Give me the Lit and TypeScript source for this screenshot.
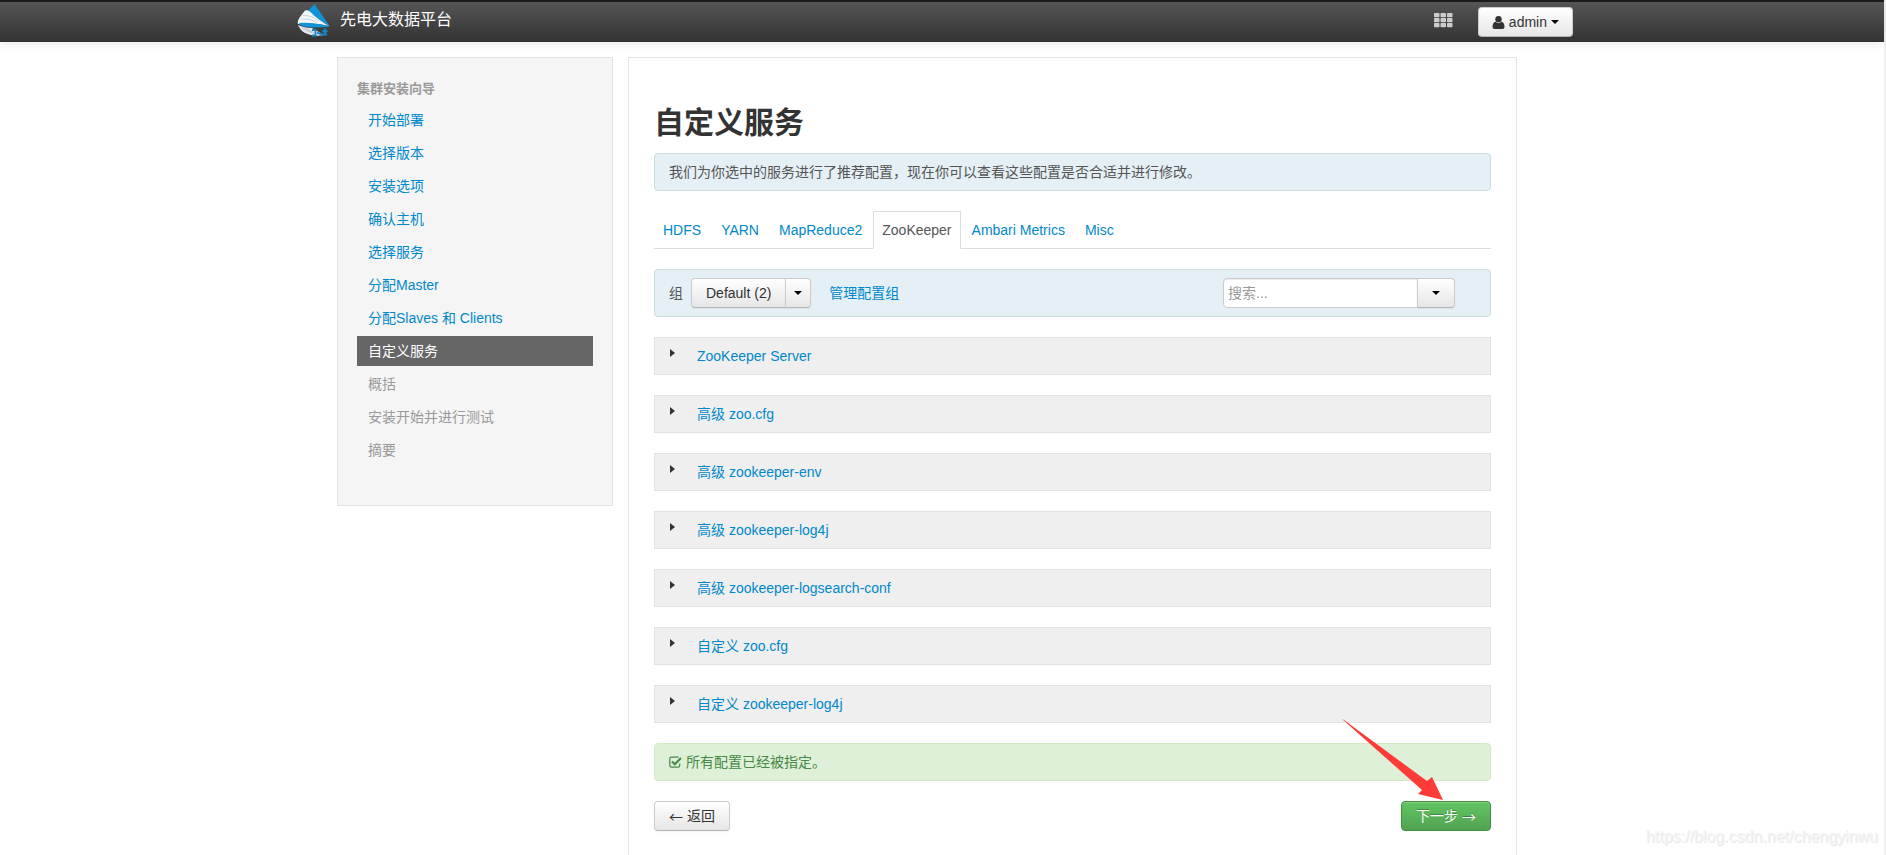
import { LitElement, html, css, svg } from "lit";
import { customElement } from "lit/decorators.js";
import { classMap } from "lit/directives/class-map.js";

type StepState = "done" | "current" | "todo";

const STEPS: Array<{ label: string; state: StepState }> = [
  { label: "开始部署", state: "done" },
  { label: "选择版本", state: "done" },
  { label: "安装选项", state: "done" },
  { label: "确认主机", state: "done" },
  { label: "选择服务", state: "done" },
  { label: "分配Master", state: "done" },
  { label: "分配Slaves 和 Clients", state: "done" },
  { label: "自定义服务", state: "current" },
  { label: "概括", state: "todo" },
  { label: "安装开始并进行测试", state: "todo" },
  { label: "摘要", state: "todo" },
];

const TABS = ["HDFS", "YARN", "MapReduce2", "ZooKeeper", "Ambari Metrics", "Misc"];
const ACTIVE_TAB = "ZooKeeper";

const SECTIONS = [
  "ZooKeeper Server",
  "高级 zoo.cfg",
  "高级 zookeeper-env",
  "高级 zookeeper-log4j",
  "高级 zookeeper-logsearch-conf",
  "自定义 zoo.cfg",
  "自定义 zookeeper-log4j",
];

const logo = html`<svg class="logo" viewBox="0 0 34 34" aria-hidden="true">
  <path d="M17.500 0 L33 22.500 L10 8 Z" fill="#0f94d8" />
  <path d="M8 6.500 Q11 5.500 14 8.500 Q20 15 32 22 Q17 18.500 1 20 Q0 17 3 13 Z" fill="#f4f7fa" />
  <path d="M6 11.500 Q14 11 22 17 M4 15 Q12 14 20 18" fill="none" stroke="#b9c3cc" stroke-width="0.700" />
  <path d="M2 19 Q16 18 33 22.500 Q18 24.500 7 22.500 Q3 21.500 2 19 Z" fill="#0f94d8" />
  <path d="M1 21 Q7 24 15 24 L27 31 Q16 33 8 29 Q3 26 1 21 Z" fill="#e4e8ec" />
  <path d="M5 24 L15 29 M9 24.500 L20 30.500" fill="none" stroke="#aab4bc" stroke-width="0.700" />
  <path d="M15 26 h3.500 v5.500 h-3.500 M20 29 q3 0 5 2 M28 24 v7 M25.500 26.500 l2.500 2 l2.500 -2 M25 30.500 h5" fill="none" stroke="#1486c8" stroke-width="1.800" />
</svg>`;

const gridIcon = svg`${[0, 1, 2].map((r) =>
  [0, 1, 2].map(
    (c) => svg`<rect x=${c * 6.5} y=${r * 5} width="5.500" height="4.300" rx="0.800" />`
  )
)}`;

@customElement("app-root")
export class AppRoot extends LitElement {
  static styles = css`
    :host {
      display: block;
      font: 14px/20px "Liberation Sans", "Noto Sans CJK SC", sans-serif;
      color: #333;
      background: #fff;
    }
    * {
      box-sizing: border-box;
    }
    a {
      color: #0088cc;
      text-decoration: none;
    }
    ul {
      list-style: none;
      margin: 0;
      padding: 0;
    }
    button,
    input {
      font: inherit;
      margin: 0;
    }
    .page {
      position: relative;
      min-height: 100vh;
      display: flex;
      flex-direction: column;
      border-right: 2px solid #f1f1f1;
    }
    .navbar {
      height: 42px;
      border-top: 2px solid #1b1b1b;
      background: linear-gradient(#555, #333);
      box-shadow: 0 1px 10px rgba(0, 0, 0, 0.1);
      padding: 0 14px 0 0;
    }
    .navbar-inner {
      max-width: 1276px;
      height: 40px;
      margin: 0 auto;
      display: flex;
      align-items: flex-start;
    }
    .brand {
      display: flex;
      gap: 9px;
      margin-right: auto;
      padding-top: 2px;
      color: #fff;
      font-size: 16px;
      line-height: 32px;
    }
    .logo {
      width: 34px;
      height: 34px;
    }
    .apps {
      border: 0;
      background: none;
      padding: 11px 0 0;
      margin-right: 25px;
      line-height: 0;
      cursor: pointer;
    }
    .apps svg {
      width: 19px;
      height: 15px;
      fill: #ccc;
    }
    .btn {
      display: inline-flex;
      align-items: center;
      justify-content: center;
      gap: 4px;
      height: 30px;
      padding: 0 14px;
      border: 1px solid #ccc;
      border-color: #ccc #ccc #b3b3b3;
      border-radius: 4px;
      background: linear-gradient(#fff, #e6e6e6);
      box-shadow: 0 1px 2px rgba(0, 0, 0, 0.05);
      color: #333;
      cursor: pointer;
    }
    .user {
      margin-top: 5px;
      padding: 0 13px;
    }
    .user svg {
      width: 13px;
      height: 13px;
      fill: #333;
    }
    .glyph {
      font-family: "Noto Sans CJK SC", sans-serif;
    }
    .next {
      border-color: #3f9140;
      background: linear-gradient(#62c462, #51a351);
      box-shadow: inset 0 1px 0 rgba(255, 255, 255, 0.2);
      color: #fff;
      text-shadow: 0 -1px 0 rgba(0, 0, 0, 0.25);
    }
    .caret {
      border: 4px solid transparent;
      border-top-color: #000;
      border-bottom: 0;
    }
    .layout {
      flex: 1;
      padding: 15px 30px 0 0;
      display: flex;
    }
    .columns {
      flex: 1;
      max-width: 1180px;
      margin: 0 auto;
      display: flex;
      gap: 15px;
    }
    .sidebar {
      flex: 0 0 276px;
      align-self: flex-start;
      padding: 21px 19px 40px;
      background: #f5f5f5;
      border: 1px solid #e3e3e3;
    }
    .sidebar h2 {
      margin: 0 0 6px;
      font-size: 13px;
      line-height: 20px;
      font-weight: bold;
      color: #999;
    }
    .steps {
      display: grid;
      gap: 3px;
    }
    .step {
      display: block;
      padding: 5px 11px;
      color: #999;
    }
    .step.done {
      color: #0088cc;
    }
    .step.current {
      background: #666;
      color: #fff;
    }
    .main {
      flex: 1;
      min-width: 0;
      padding: 45px 25px 24px;
      border: 1px solid #e3e3e3;
      border-bottom: 0;
      display: flex;
      flex-direction: column;
      gap: 20px;
    }
    .main h1 {
      margin: 0 0 -10px;
      font-size: 30px;
      line-height: 40px;
    }
    .alert {
      padding: 8px 14px;
      border: 1px solid #ccdbe0;
      border-radius: 4px;
      background: #e4f0f5;
      color: #555;
    }
    .alert.ok {
      display: flex;
      align-items: center;
      gap: 4px;
      background: #dff0d8;
      border-color: #d6e9c6;
      color: #468847;
    }
    .ok svg {
      width: 13px;
      height: 12px;
    }
    .tabs {
      display: flex;
      gap: 2px;
      border-bottom: 1px solid #ddd;
    }
    .tab {
      display: block;
      margin-bottom: -1px;
      padding: 8px;
      border: 1px solid transparent;
    }
    .tab.active {
      color: #555;
      background: #fff;
      border-color: #ddd #ddd #fff;
    }
    .groups {
      display: flex;
      align-items: center;
      padding-right: 35px;
    }
    .split {
      display: flex;
      margin: 0 18px 0 8px;
    }
    .split .btn:first-child {
      border-radius: 4px 0 0 4px;
    }
    .split .btn:last-child,
    .search .btn {
      margin-left: -1px;
      border-radius: 0 4px 4px 0;
    }
    .split .btn:last-child {
      padding: 0 8px;
    }
    .search {
      display: flex;
      margin-left: auto;
    }
    .search input {
      width: 195px;
      height: 30px;
      padding: 0 4px;
      border: 1px solid #ccc;
      border-radius: 4px 0 0 4px;
      box-shadow: inset 0 1px 1px rgba(0, 0, 0, 0.075);
      color: #555;
      background: #fff;
    }
    .search input::placeholder {
      color: #999;
      opacity: 1;
    }
    .search .btn {
      width: 38px;
    }
    .section {
      display: flex;
      gap: 22px;
      padding: 8px 15px;
      border: 1px solid #e3e3e3;
      background: #efefef;
    }
    .arrow {
      margin-top: 3px;
      height: 8px;
      border: 4px solid transparent;
      border-left: 5px solid #333;
      border-right: 0;
    }
    .actions {
      display: flex;
      justify-content: space-between;
    }
    .next-wrap {
      position: relative;
      display: flex;
    }
    .pointer {
      position: absolute;
      right: 47px;
      bottom: 30px;
      width: 102px;
      height: 82px;
      fill: #ff3b38;
      pointer-events: none;
    }
    .watermark {
      position: absolute;
      right: 6px;
      bottom: 8px;
      font-size: 16px;
      color: #f4f4f4;
      text-shadow: 1px 1px 1px #e4e4e4;
    }
  `;

  render() {
    return html`
      <div class="page">
        <header class="navbar">
          <div class="navbar-inner">
            <a class="brand" href="#">${logo}<span>先电大数据平台</span></a>
            <button class="apps" aria-label="Views">
              <svg viewBox="0 0 19 15">${gridIcon}</svg>
            </button>
            <button class="btn user">
              <svg viewBox="0 0 12 13">
                <circle cx="6" cy="3.200" r="3.200" />
                <path d="M3 5.800 Q0 6.500 0 11 Q0 13 2 13 H10 Q12 13 12 11 Q12 6.500 9 5.800 Q6 8.500 3 5.800 Z" />
              </svg>
              <span>admin</span><span class="caret"></span>
            </button>
          </div>
        </header>
        <div class="layout">
          <div class="columns">
            <nav class="sidebar">
              <h2>集群安装向导</h2>
              <ul class="steps">
                ${STEPS.map(
                  (s) => html`<li>
                    <a href="#" class=${classMap({ step: true, [s.state]: true })}>${s.label}</a>
                  </li>`
                )}
              </ul>
            </nav>
            <main class="main">
              <h1>自定义服务</h1>
              <div class="alert">我们为你选中的服务进行了推荐配置，现在你可以查看这些配置是否合适并进行修改。</div>
              <ul class="tabs">
                ${TABS.map(
                  (t) => html`<li>
                    <a href="#" class=${classMap({ tab: true, active: t === ACTIVE_TAB })}>${t}</a>
                  </li>`
                )}
              </ul>
              <div class="alert groups">
                <span>组</span>
                <div class="split">
                  <button class="btn">Default (2)</button>
                  <button class="btn" aria-label="选择配置组"><span class="caret"></span></button>
                </div>
                <a href="#">管理配置组</a>
                <div class="search">
                  <input type="text" placeholder="搜索..." aria-label="搜索" />
                  <button class="btn" aria-label="过滤"><span class="caret"></span></button>
                </div>
              </div>
              ${SECTIONS.map(
                (s) => html`<div class="section"><span class="arrow"></span><a href="#">${s}</a></div>`
              )}
              <div class="alert ok">
                <svg viewBox="0 0 13 12">
                  <path d="M9.500 1.200 H2.500 Q0.800 1.200 0.800 3 V9.500 Q0.800 11.200 2.500 11.200 H9 Q10.700 11.200 10.700 9.500 V7.500" fill="none" stroke="#468847" stroke-width="1.200" />
                  <path d="M3 5.500 L5.800 8.200 L12 2" fill="none" stroke="#468847" stroke-width="2.200" />
                </svg>
                <span>所有配置已经被指定。</span>
              </div>
              <div class="actions">
                <button class="btn"><span class="glyph">←</span><span>返回</span></button>
                <div class="next-wrap">
                  <button class="btn next"><span>下一步</span><span class="glyph">→</span></button>
                  <svg class="pointer" viewBox="0 0 102 82" aria-hidden="true">
                    <path d="M0 0 L2 1 L85 62 L90 58 L101 81 L76 75 L80 71 Z" />
                  </svg>
                </div>
              </div>
            </main>
          </div>
        </div>
        <div class="watermark">https://blog.csdn.net/chengyinwu</div>
      </div>
    `;
  }
}
